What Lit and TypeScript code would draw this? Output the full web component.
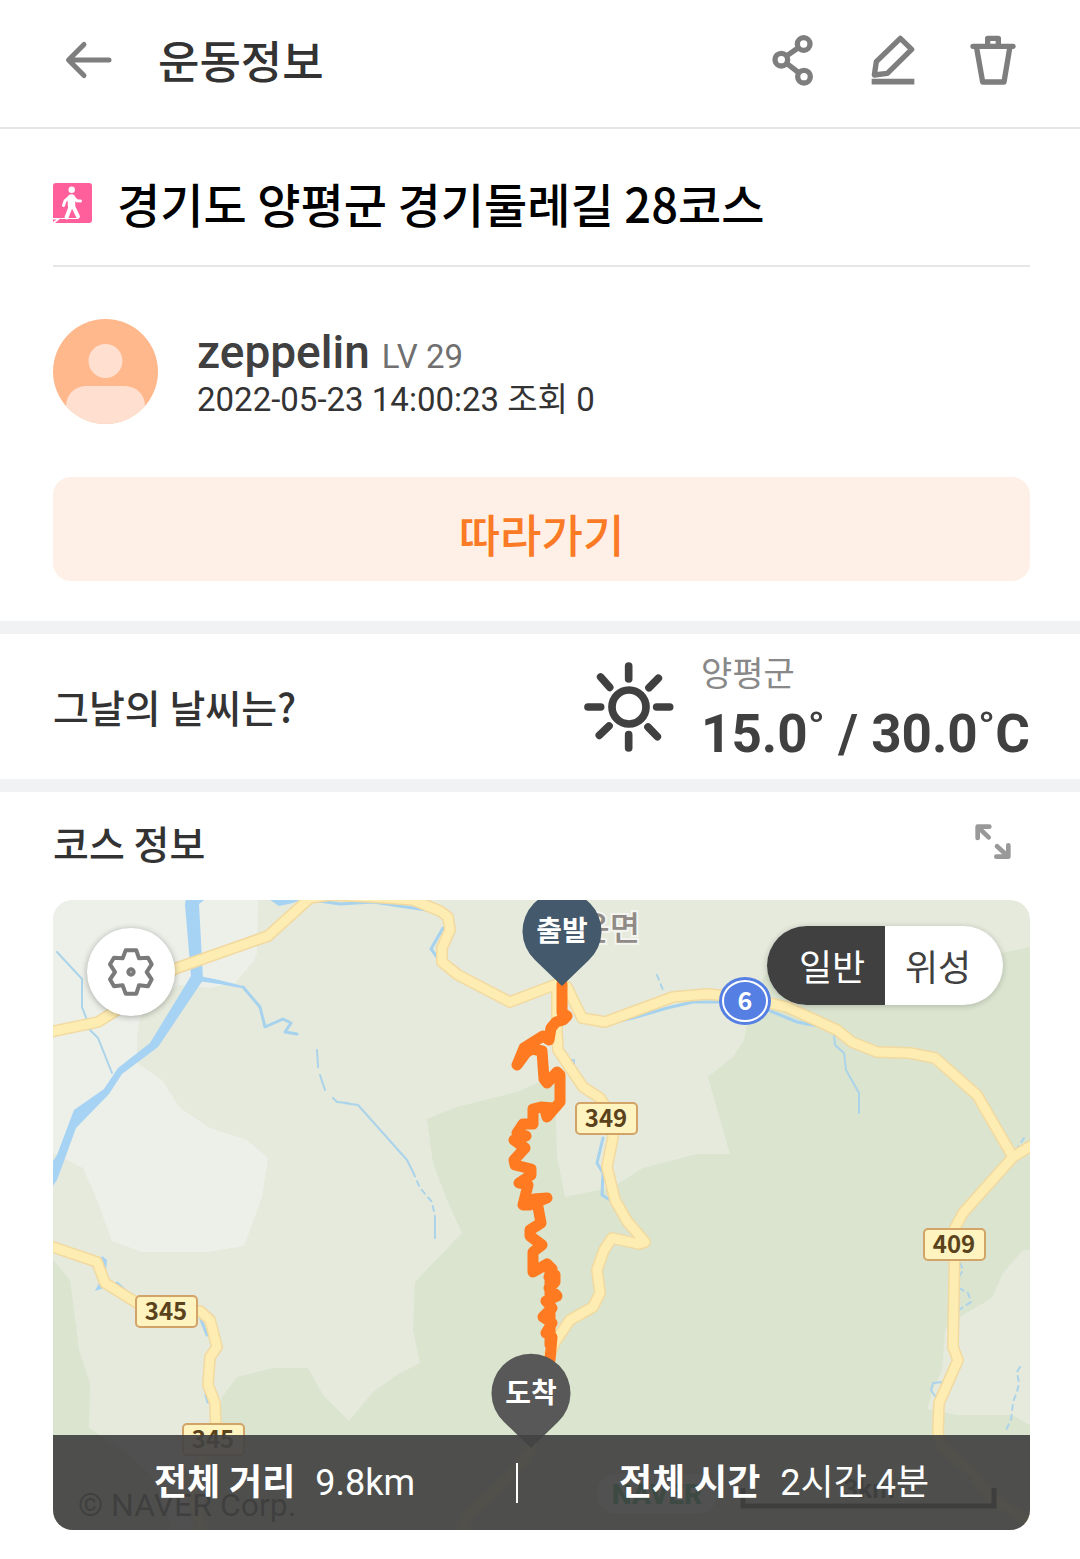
import { LitElement, html, svg, css } from "lit";
import { customElement, state } from "lit/decorators.js";

/** Map geometry, in the units of the map's own view box. */
const LIGHT_LAND =
  "M53 900H258L257 953L253 962L235 983L210 988L177 985L140 1017L137 1037V1063L162 1080L180 1108L210 1128L247 1140L268 1158L262 1197L250 1230L244 1246L207 1252H142L112 1241L97 1200L83 1168L67 1160L53 1153Z";

const FORESTS = [
  "M53 1260L70 1280L77 1333L79 1350L90 1383L89 1428L107 1440L130 1455L153 1477L173 1530H53Z",
  "M427 1119L457 1107L517 1092L537 1083L555 1077L556 1123L557 1157L565 1197L613 1187L643 1168L697 1154H730L708 1077L733 1057L744 1040L748 1020L762 980L775 962L1002 953L1030 947V1250H1023L1003 1273L992 1298L958 1318L945 1330L942 1370L933 1390L927 1409L957 1415H1012L1030 1425V1530H200L215 1440L222 1397L237 1377L273 1368H308L323 1395L349 1421L373 1392L397 1375L420 1363L413 1330L415 1282L438 1258L462 1233L447 1200L433 1163Z",
];

const RIVERS = [
  "M186 897H208L199 904L202 960L203 980L158 1047L122 1074L109 1094L76 1128L57 1180L50 1190V1166L57 1155L74 1110L104 1089L118 1068L150 1043L191 976L188 940L185 905Z",
  "M266 897H306L293 903L279 906Z",
  "M199 976L219 980L243 986L241 988L219 984L198 981Z",
  "M102 1256L107 1260L106 1270L99 1262Z",
  "M95 1291L100 1281L104 1288Z",
];

const STREAMS = [
  "M312 900L340 904L373 902L433 911",
  "M600 1025L633 1018L667 1008L693 1002L720 1002",
  "M768 1010L797 1022L818 1026",
  "M443 928L431 949L437 957",
  "M603 1138L597 1163L603 1173L602 1195L610 1200",
  "M117 1283L128 1293",
  "M200 1317L207 1335",
  "M206 1395L208 1402",
  "M243 987L260 1007L265 1027L283 1019L291 1023L285 1032L297 1034",
];

const BROOKS = [
  "M57 952L82 979V1007L87 1020L90 1030L98 1038L112 1073",
  "M317 1050L318 1067M320 1075L325 1090M333 1098L337 1102L348 1103M344 1103L358 1105L407 1160L413 1172",
  "M435 1217V1238",
  "M834 1034L835 1045L844 1053L846 1070L859 1093V1113",
  "M568 1060H574V1067",
  "M943 1382L933 1383L931 1390L937 1399",
];

const DASHED_BROOKS = [
  "M413 1172L420 1188L432 1202L435 1217",
  "M657 975L663 990",
  "M960 1263L963 1270L959 1277",
  "M959 1288L968 1293L971 1302L959 1310",
  "M1020 1367L1017 1372L1019 1383L1017 1392L1013 1402L1011 1420L1005 1432",
  "M1024 1138L1018 1147",
];

const ROADS = [
  "M557 984L557 1033L558 1050L583 1087L600 1098L614 1120L613 1137L607 1167L615 1200L627 1221L645 1242L639 1244L612 1238L604 1250L597 1270L600 1293L593 1307L570 1320L555 1342L540 1380L531 1450L510 1477L470 1513L460 1532",
  "M1013 1157L963 1213L955 1228L953 1347L958 1360L939 1403L938 1433L942 1447L973 1473L990 1497L1032 1523",
  "M50 1246L97 1262L105 1283L137 1303L166 1311L200 1311L210 1320L217 1347L210 1357L208 1385L215 1403L216 1430L205 1455L190 1480L202 1532",
  "M50 1032L98 1022L117 1010L150 982L177 968L268 936L310 898L330 895L373 897L413 900L440 911L448 917L450 930L442 948V962L458 975L510 1002L557 984L567 987L582 1018L605 1022L673 997L707 994L740 997L787 1007L837 1030L852 1042L877 1052L910 1053L935 1058L977 1095L1013 1157L1034 1144",
];

const TRACK =
  "M562 984V1013L567 1016L563 1020L556 1022L551 1028L549 1040L543 1036L524 1048L517 1065L528 1050L522 1055L532 1049L542 1051L544 1079L547 1083L557 1072L560 1075V1102L547 1117L545 1110L553 1108L541 1107L533 1109V1124H523L517 1133L526 1136L514 1140L525 1148L514 1160L515 1165L531 1169V1175L519 1183L528 1185L523 1205H530L547 1198L534 1199L538 1207L541 1223L530 1230V1236L542 1245L533 1252V1272L547 1264L552 1269L549 1277L555 1275L555 1282L549 1288L557 1296L546 1301L552 1308L543 1317L552 1323L546 1333L552 1337L550 1360M550 1270V1345";

const ROAD_SIGNS = [
  { label: "349", x: 606, y: 1118 },
  { label: "409", x: 954, y: 1244 },
  { label: "345", x: 166, y: 1311 },
  { label: "345", x: 213, y: 1439 },
];

const PINS = [
  { label: "출발", kind: "start", x: 562, y: 931 },
  { label: "도착", kind: "end", x: 531, y: 1393 },
];

const STATS = [
  { label: "전체 거리", value: "9.8km" },
  { label: "전체 시간", value: "2시간 4분" },
];

@customElement("course-map")
export class CourseMap extends LitElement {
  static styles = css`
    :host {
      display: block;
    }
    svg {
      display: block;
      width: 100%;
      height: auto;
      font-family: "Noto Sans CJK KR", sans-serif;
    }
    .land { fill: #e5eadc; }
    .light { fill: #ecf0e9; }
    .forest { fill: #dae4cf; }
    .river { fill: #a6d2f3; }
    .line {
      fill: none;
      stroke-linejoin: round;
      stroke-linecap: round;
    }
    .stream { stroke: #a6d2ee; stroke-width: 3; }
    .brook { stroke: #abd3ea; stroke-width: 2; }
    .dashed { stroke-dasharray: 5 5; }
    .casing { stroke: #f2d9a0; stroke-width: 12; }
    .road { stroke: #feedb2; stroke-width: 9; }
    .track { stroke: #ff7a20; stroke-width: 11; }
    .place {
      font-size: 33px;
      font-weight: 500;
      fill: #918b87;
      stroke: #f4f5f0;
      stroke-width: 4px;
      paint-order: stroke;
    }
    .plate { fill: #fff3bf; stroke: #d3a468; stroke-width: 2; }
    .number { font-size: 24px; font-weight: 700; fill: #5a431c; }
    .route-edge { fill: #557fe2; }
    .route-ring { fill: #557fe2; stroke: #fff; stroke-width: 2; }
    .route-number { font-size: 25px; font-weight: 700; fill: #fff; }
    .start { fill: #45596c; }
    .end { fill: #585858; }
    .pin-text { font-size: 28px; font-weight: 700; fill: #fff; }
    .copyright { font-family: Roboto, sans-serif; font-size: 32px; fill: #222; }
    .brand-pill { fill: #fff; opacity: 0.8; }
    .brand { font-family: Roboto, sans-serif; font-size: 28px; font-weight: 900; fill: #03a94d; }
    .scale { stroke: #111; stroke-width: 5; stroke-linecap: butt; stroke-linejoin: miter; }
    .scale-text { font-family: Roboto, sans-serif; font-size: 26px; font-weight: 700; fill: #222; }
  `;

  render() {
    return html`
      <svg viewBox="53 900 977 630" role="img" aria-label="코스 지도">
        <rect class="land" x="53" y="900" width="977" height="630" />
        <path class="light" d=${LIGHT_LAND} />
        ${FORESTS.map((d) => svg`<path class="forest" d=${d} />`)}
        ${RIVERS.map((d) => svg`<path class="river" d=${d} />`)}
        ${STREAMS.map((d) => svg`<path class="line stream" d=${d} />`)}
        ${BROOKS.map((d) => svg`<path class="line brook" d=${d} />`)}
        ${DASHED_BROOKS.map((d) => svg`<path class="line brook dashed" d=${d} />`)}
        ${ROADS.map((d) => svg`<path class="line casing" d=${d} />`)}
        ${ROADS.map((d) => svg`<path class="line road" d=${d} />`)}
        <text class="place" x="640" y="940" text-anchor="end">청운면</text>
        ${ROAD_SIGNS.map(
          (s) => svg`
            <rect class="plate" x=${s.x - 30} y=${s.y - 15} width="61" height="31" rx="4" />
            <text class="number" x=${s.x} y=${s.y + 9} text-anchor="middle">${s.label}</text>`
        )}
        <ellipse class="route-edge" cx="745" cy="1001" rx="26" ry="24" />
        <ellipse class="route-ring" cx="745" cy="1001" rx="22" ry="20" />
        <text class="route-number" x="745" y="1010" text-anchor="middle">6</text>
        <path class="line track" d=${TRACK} />
        ${PINS.map(
          (p) => svg`
            <path class=${p.kind} transform="translate(${p.x} ${p.y})"
              d="M0 55L-27 29A39.5 39.5 0 1 1 27 29Z" />
            <text class="pin-text" x=${p.x} y=${p.y + 10} text-anchor="middle">${p.label}</text>`
        )}
        <text class="copyright" x="78" y="1516">© NAVER Corp.</text>
        <rect class="brand-pill" x="597" y="1474" width="120" height="40" rx="20" />
        <text class="brand" x="657" y="1504" text-anchor="middle">NAVER</text>
        <path class="line scale" d="M743 1488V1506H994V1488" />
        <text class="scale-text" x="869" y="1498" text-anchor="middle">3km</text>
      </svg>
    `;
  }
}

@customElement("app-root")
export class AppRoot extends LitElement {
  @state() private mapType = "일반";

  static styles = css`
    :host {
      display: block;
      background: #fff;
      color: #333;
      font-family: "Noto Sans CJK KR", sans-serif;
      font-size: 39px;
      line-height: 1.2;
    }
    * {
      box-sizing: border-box;
    }
    h1, h2, p {
      margin: 0;
      font-size: inherit;
      font-weight: 500;
    }
    button {
      display: block;
      margin: 0;
      padding: 0;
      border: 0;
      background: none;
      color: inherit;
      font: inherit;
      cursor: pointer;
    }
    svg {
      display: block;
    }
    .stroke {
      fill: none;
      stroke: currentColor;
      stroke-linecap: round;
      stroke-linejoin: round;
    }
    .icon-button {
      width: 60px;
      height: 60px;
      color: #7e7e7e;
    }
    .icon-button.pale {
      color: #999;
    }
    .top {
      display: flex;
      align-items: center;
      height: 129px;
      padding: 0 57px 8px;
      border-bottom: 2px solid #e6e6e6;
    }
    .top h1 {
      flex: 1;
      padding-left: 41px;
      font-size: 45px;
    }
    .actions {
      display: flex;
      gap: 40px;
    }
    .side {
      padding: 0 50px 0 53px;
    }
    .course-name {
      display: flex;
      align-items: center;
      gap: 24px;
      height: 138px;
      padding-top: 12px;
      border-bottom: 2px solid #e6e6e6;
      color: #000;
      font-size: 47px;
    }
    .walk-tile {
      fill: #ff5f9b;
    }
    .walk-figure {
      color: #fff;
    }
    .solid {
      fill: #fff;
    }
    .profile {
      display: flex;
      align-items: center;
      gap: 39px;
      padding: 52px 0 53px;
    }
    .who {
      display: flex;
      flex-direction: column;
      padding-top: 8px;
      font-family: Roboto, "Noto Sans CJK KR", sans-serif;
      font-size: 33px;
      line-height: 48px;
    }
    .user {
      display: flex;
      align-items: baseline;
      gap: 12px;
      height: 48px;
    }
    .nick {
      font-size: 46px;
      color: #404040;
    }
    .level {
      font-weight: 400;
      color: #707070;
    }
    .follow {
      width: 100%;
      height: 104px;
      margin-bottom: 40px;
      padding-top: 10px;
      border-radius: 18px;
      background: #fff0e7;
      color: #fb7a26;
      font-size: 45px;
      font-weight: 500;
    }
    .weather {
      display: flex;
      align-items: center;
      justify-content: space-between;
      height: 171px;
      border: solid #f1f2f4;
      border-width: 13px 0;
    }
    .forecast {
      display: flex;
      align-items: center;
      gap: 24px;
      color: #404040;
    }
    .local {
      padding-top: 6px;
    }
    .town {
      font-size: 34px;
      font-weight: 400;
      line-height: 48px;
      color: #888;
    }
    .degrees {
      font-family: Roboto, sans-serif;
      font-size: 53px;
      font-weight: 700;
      line-height: 76px;
    }
    .course-head {
      display: flex;
      align-items: center;
      justify-content: space-between;
      height: 108px;
      padding: 0 57px 8px 53px;
    }
    .map-area {
      padding: 0 50px 29px 53px;
    }
    .map {
      position: relative;
      overflow: hidden;
      border-radius: 20px;
    }
    .settings {
      position: absolute;
      top: 28px;
      left: 34px;
      display: grid;
      place-items: center;
      width: 88px;
      height: 88px;
      border-radius: 50%;
      background: #fff;
      color: #7a7a7a;
      box-shadow: 0 1px 6px rgba(0, 0, 0, 0.3);
    }
    .toggle {
      position: absolute;
      top: 26px;
      right: 27px;
      display: flex;
      overflow: hidden;
      border-radius: 40px;
      background: #fff;
      box-shadow: 0 1px 6px rgba(0, 0, 0, 0.2);
    }
    .toggle button {
      width: 118px;
      height: 79px;
      font-size: 36px;
      color: #404040;
    }
    .toggle button:first-child {
      padding-left: 12px;
    }
    .toggle button:last-child {
      padding-right: 12px;
    }
    .toggle .on {
      background: #404040;
      color: #fff;
    }
    .stats {
      position: absolute;
      right: 0;
      bottom: 0;
      left: 0;
      display: flex;
      align-items: center;
      justify-content: space-evenly;
      height: 95px;
      background: rgba(66, 66, 66, 0.92);
      color: #fff;
      font-family: Roboto, "Noto Sans CJK KR", sans-serif;
      font-size: 36px;
    }
    .stat {
      display: flex;
      align-items: baseline;
      gap: 20px;
      padding-top: 2px;
    }
    .stat b {
      font-weight: 700;
    }
    .divider {
      width: 2px;
      height: 40px;
      background: #fff;
    }
  `;

  render() {
    return html`
      <header class="top">
        <button class="icon-button" aria-label="뒤로">
          <svg class="stroke" width="60" height="60" viewBox="57 30 60 60" stroke-width="5">
            <path d="M109 60H69M84 44.500L68.500 60L84 75.500" />
          </svg>
        </button>
        <h1>운동정보</h1>
        <div class="actions">
          <button class="icon-button" aria-label="공유">
            <svg class="stroke" width="60" height="60" viewBox="70 91 180 180" stroke-width="16">
              <circle cx="192" cy="133" r="19" />
              <circle cx="125" cy="180" r="19" />
              <circle cx="193" cy="231" r="19" />
              <path d="M142 168L175 145M142 192L176 218" />
            </svg>
          </button>
          <button class="icon-button" aria-label="수정">
            <svg class="stroke" width="60" height="60" viewBox="370 91 180 180" stroke-width="16">
              <path d="M482 116L516 149L443 221L404 226L410 186Z" />
              <path d="M396 246H524" stroke-width="17" stroke-linecap="butt" />
            </svg>
          </button>
          <button class="icon-button" aria-label="삭제">
            <svg class="stroke" width="60" height="60" viewBox="670 91 180 180" stroke-width="16">
              <path d="M700 140H820M711 146L729 247H793L810 146M744 138V116H776V138" />
            </svg>
          </button>
        </div>
      </header>

      <main>
        <section class="side">
          <div class="course-name">
            <svg width="40" height="40" viewBox="53 183 40 40">
              <path class="walk-tile" d="M56 183H89Q92 183 92 186V220Q92 223 89 223H55L61 218H53V186Q53 183 56 183Z" />
              <path class="walk-tile" d="M53 219.500H56.500L53 222Z" />
              <circle class="solid" cx="71.700" cy="189.800" r="3.200" />
              <g class="stroke walk-figure">
                <path d="M69 197.500L65 201L63.500 205.500M74 198L77 200.800L80.500 201" stroke-width="3" />
                <path d="M71.500 198V205" stroke-width="7.500" />
                <path d="M70.500 207L66.500 217.500M73 206L78 216.500" stroke-width="4" />
                <path d="M61 218.500H78" stroke-width="1" />
              </g>
            </svg>
            <h2>경기도 양평군 경기둘레길 28코스</h2>
          </div>

          <div class="profile">
            <svg width="105" height="105" viewBox="0 0 105 105" role="img" aria-label="프로필">
              <defs>
                <clipPath id="round"><circle cx="52.500" cy="52.500" r="52.500" /></clipPath>
              </defs>
              <g clip-path="url(#round)">
                <rect width="105" height="105" fill="#ffb78c" />
                <circle cx="52.500" cy="42" r="17" fill="#ffe0d0" />
                <rect x="13" y="67" width="79" height="60" rx="20" fill="#ffe0d0" />
              </g>
            </svg>
            <div class="who">
              <p class="user"><span class="nick">zeppelin</span><span class="level">LV 29</span></p>
              <span>2022-05-23 14:00:23 조회 0</span>
            </div>
          </div>

          <button class="follow">따라가기</button>
        </section>

        <section class="weather side">
          <h2>그날의 날씨는?</h2>
          <div class="forecast">
            <svg class="stroke" width="96" height="96" viewBox="65 118 288 288" stroke-width="23">
              <circle cx="209" cy="262" r="51" />
              <path d="M208 139V178M208 345V385M86 262H124M292 262H331M124 172L151 203M297 176L269 204M120 347L149 319M266 322L294 351" />
            </svg>
            <div class="local">
              <p class="town">양평군</p>
              <p class="degrees">15.0˚ / 30.0˚C</p>
            </div>
          </div>
        </section>

        <section>
          <div class="course-head">
            <h2>코스 정보</h2>
            <button class="icon-button pale" aria-label="지도 확대">
              <svg class="stroke" width="60" height="60" viewBox="1210 577 180 180" stroke-width="14">
                <path d="M1254 655V621H1289M1256 623L1287 653M1346 677V711H1310M1312 680L1344 709" />
              </svg>
            </button>
          </div>
          <div class="map-area">
            <div class="map">
              <course-map></course-map>
              <button class="settings" aria-label="지도 설정">
                <svg class="stroke" width="50" height="50" viewBox="200 173 150 150" stroke-width="12">
                  <path d="M259 183H291L299 207L326 205L337 225L322 248L337 270L326 291L299 288L291 313H259L250 288L224 291L212 270L227 248L212 225L224 205L250 207Z" />
                  <circle cx="275" cy="248" r="8" />
                </svg>
              </button>
              <div class="toggle" role="group" aria-label="지도 종류">
                ${["일반", "위성"].map(
                  (t) => html`<button
                    class=${this.mapType === t ? "on" : ""}
                    aria-pressed=${this.mapType === t}
                    @click=${() => (this.mapType = t)}
                  >${t}</button>`
                )}
              </div>
              <div class="stats">
                ${STATS.map(
                  (s, i) => html`${i ? html`<span class="divider"></span>` : ""}
                    <span class="stat"><b>${s.label}</b><span>${s.value}</span></span>`
                )}
              </div>
            </div>
          </div>
        </section>
      </main>
    `;
  }
}
